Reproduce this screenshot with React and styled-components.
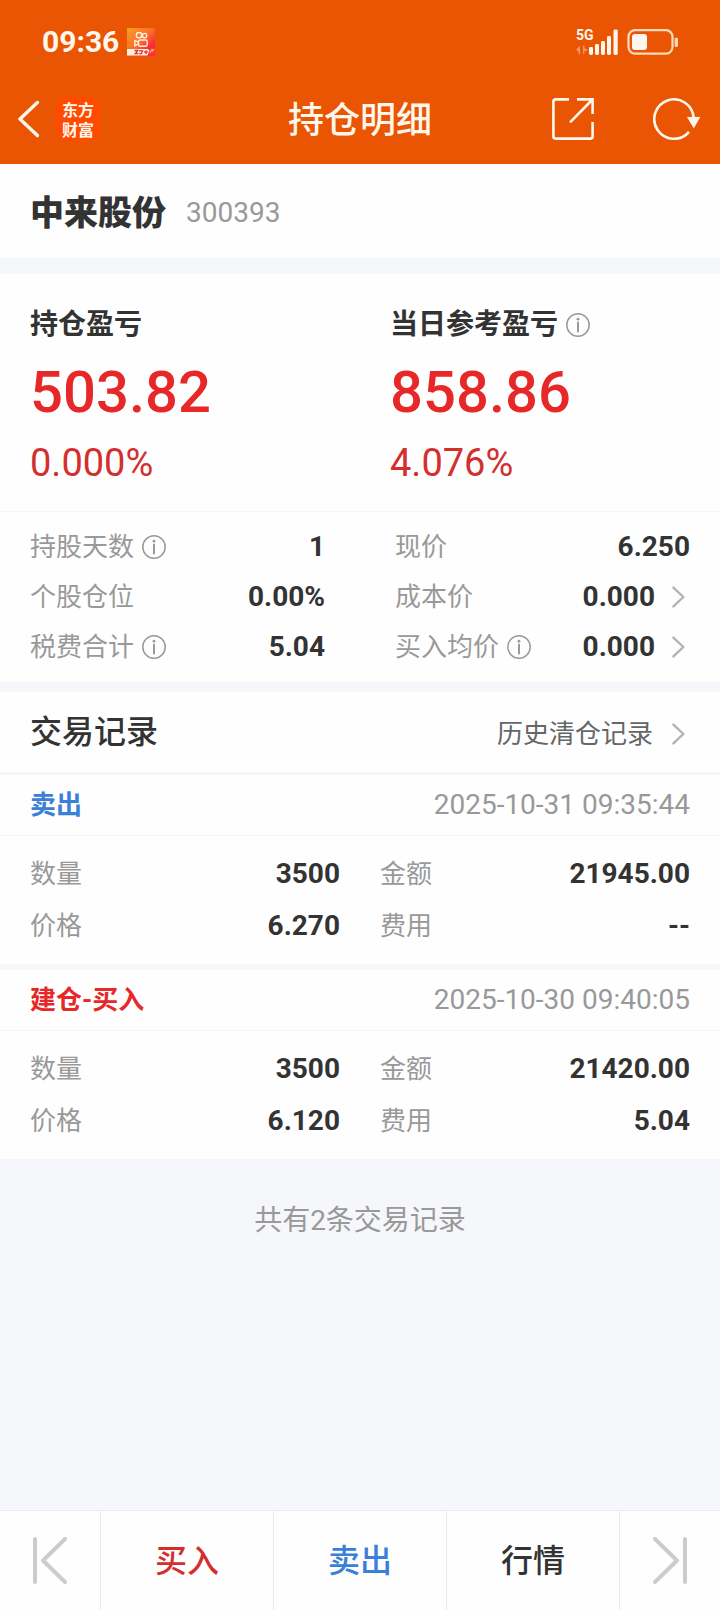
import React from "react";
import styled, { createGlobalStyle, css } from "styled-components";

const color = {
  brand: "#e95502",
  cream: "#fff6ec",
  ink: "#333333",
  soft: "#666666",
  muted: "#999999",
  faint: "#cccccc",
  chevron: "#b3b3b3",
  red: "#e62828",
  redDark: "#d42f2f",
  blue: "#3a80d9",
  band: "#f6f7fa",
  line: "#f5f6f8",
  rule: "#e9ebee",
};

const GlobalStyle = createGlobalStyle`
  *, *::before, *::after { box-sizing: border-box; }
  body {
    margin: 0;
    background: ${color.band};
    color: ${color.ink};
    font-family: Roboto, "Noto Sans CJK SC", sans-serif;
    font-size: 26px;
    line-height: 36px;
  }
  h1, h2, h3, p, dl, dd { margin: 0; font-weight: 400; }
  button {
    border: 0;
    padding: 0;
    background: none;
    color: inherit;
    font: inherit;
    cursor: pointer;
  }
  svg { display: block; flex: none; }
`;

const Page = styled.div`
  display: flex;
  flex-direction: column;
  min-height: 100vh;
`;

const Header = styled.header`
  background: ${color.brand};
  color: ${color.cream};
`;

const StatusBar = styled.div`
  display: flex;
  align-items: center;
  justify-content: space-between;
  height: 74px;
  padding: 10px 41px 0 42px;
`;

const StatusGroup = styled.div`
  display: flex;
  align-items: center;
  gap: 8px;
`;

const Clock = styled.time`
  font-size: 30px;
  font-weight: 700;
`;

const TitleBar = styled.div`
  display: grid;
  grid-template-columns: 1fr auto 1fr;
  align-items: center;
  height: 90px;
  padding: 0 18px;
`;

const TitleSide = styled.div`
  display: flex;
  align-items: center;
  justify-content: ${(p) => (p.$end ? "flex-end" : "flex-start")};
  gap: ${(p) => (p.$end ? "59px" : "16px")};
`;

const Title = styled.h1`
  padding-top: 3px;
  font-size: 36px;
  font-weight: 500;
`;

const BrandBadge = styled.span`
  display: grid;
  place-content: center;
  width: 44px;
  height: 44px;
  border-radius: 9px;
  background: #ff4a00;
  font-family: "Noto Sans CJK SC", sans-serif;
  font-size: 16px;
  font-weight: 700;
  line-height: 20px;
`;

const Main = styled.main`
  flex: 1;
`;

const Panel = styled.section`
  background: #fefefe;
  border-bottom: ${(p) => p.$band || 0}px solid ${color.band};
`;

const StockBar = styled.div`
  display: flex;
  align-items: center;
  gap: 20px;
  height: 94px;
  padding: 3px 30px 0;
`;

const StockName = styled.h2`
  font-size: 34px;
  font-weight: 900;
`;

const StockCode = styled.span`
  color: ${color.muted};
  font-size: 28px;
`;

const ProfitGrid = styled.div`
  display: grid;
  grid-template-columns: 1fr 1fr;
  padding: 32px 0 25px;
  border-bottom: 1px solid ${color.line};
`;

const Profit = styled.div`
  padding-left: 30px;
`;

const ProfitTitle = styled.h3`
  display: flex;
  align-items: center;
  gap: 8px;
  height: 38px;
  font-size: 28px;
  font-weight: 700;
`;

const ProfitAmount = styled.p`
  color: ${color.red};
  font-size: 58px;
  font-weight: 500;
  line-height: 96px;
`;

const ProfitRate = styled.p`
  color: ${color.redDark};
  font-size: 38px;
  line-height: 46px;
`;

const FactGrid = styled.dl`
  display: grid;
  grid-template-columns: 1fr 1fr;
  grid-auto-rows: ${(p) => p.$row}px;
  column-gap: ${(p) => p.$gap}px;
  padding: ${(p) => p.$pad}px 30px;
`;

const FactRow = styled.div`
  display: flex;
  align-items: center;
  justify-content: space-between;
`;

const FactLabel = styled.dt`
  display: flex;
  align-items: center;
  gap: 8px;
  color: ${color.muted};
`;

const FactValue = styled.dd`
  display: flex;
  align-items: center;
  gap: 16px;
  font-size: 28px;
  font-weight: 700;
`;

const RecordsBar = styled.div`
  display: flex;
  align-items: center;
  justify-content: space-between;
  height: 83px;
  padding: 0 30px;
  border-bottom: 3px solid ${color.line};
`;

const RecordsTitle = styled.h2`
  font-size: 32px;
  font-weight: 500;
`;

const HistoryLink = styled.a`
  display: flex;
  align-items: center;
  gap: 18px;
  padding-top: 3px;
  color: ${color.soft};
  text-decoration: none;
`;

const TradeBar = styled.div`
  display: flex;
  align-items: center;
  justify-content: space-between;
  height: 61px;
  padding: 0 30px;
  border-bottom: 1px solid ${color.line};
`;

const TradeKind = styled.h3`
  color: ${(p) => (p.$sell ? color.blue : color.red)};
  font-size: 26px;
  font-weight: 700;
`;

const TradeTime = styled.time`
  color: ${color.muted};
  font-size: 28px;
`;

const Summary = styled.p`
  padding: 44px 30px;
  color: ${color.muted};
  font-size: 28px;
  text-align: center;
`;

const BottomBar = styled.nav`
  display: flex;
  height: 100px;
  border-top: 1px solid ${color.rule};
  background: #fefefe;
`;

const tone = { red: color.redDark, blue: color.blue, ink: color.ink };

const Tab = styled.button`
  display: flex;
  flex: 1;
  align-items: center;
  justify-content: center;
  color: ${(p) => tone[p.$tone]};
  font-size: 32px;
  font-weight: 500;
  border-left: 1px solid ${color.rule};
  ${(p) =>
    p.$step &&
    css`
      flex: 0 0 101px;
      color: ${color.faint};
    `}
  &:first-child {
    flex-basis: 100px;
    border-left: 0;
  }
`;

function AppBadge() {
  return (
    <svg width="28" height="28" viewBox="0 0 28 28" fill="none" aria-hidden="true">
      <defs>
        <linearGradient id="badge" x1="0" y1="0" x2="1" y2="1">
          <stop offset="0" stopColor="#f9a023" />
          <stop offset="0.5" stopColor="#fb6a2c" />
          <stop offset="0.75" stopColor="#fb2a3c" />
          <stop offset="1" stopColor="#ff2a50" />
        </linearGradient>
      </defs>
      <rect width="28" height="28" fill="url(#badge)" />
      <g stroke="#fff0e0" strokeWidth="1.4">
        <circle cx="12" cy="7.2" r="2.7" />
        <circle cx="17.6" cy="7.6" r="2.2" />
        <rect x="11.5" y="12" width="8.7" height="6.2" rx="1.6" />
        <path d="M11.5 14.2L7.8 12.6v5l3.7-1.6" />
      </g>
      <path d="M0 21h20.5l2 1.2L20.5 27.4H0z" fill="#fff0e0" />
      <path d="M7.5 22.5h3.2l-2.4 3h3M12 22.8h3.6l-1.2 2.8h-2.2M17.2 24h3.6M19 22.3v3.6" stroke="#d8382a" strokeWidth="1.3" />
      <path d="M23 25l1.6-3.4h2L25 24" stroke="#fbb04c" strokeWidth="1.2" />
    </svg>
  );
}

function SignalIcon() {
  return (
    <svg width="43" height="36" viewBox="0 -4 43 36" fill={color.cream} role="img" aria-label="5G">
      <text x="0" y="12" fontSize="14" fontWeight="700">5G</text>
      <g opacity="0.4">
        <path d="M4 18v8.5H2.6V24L0 21.6 4 18z" />
        <path d="M7 17.5v8.5l1.4-.2v-2.2L12 22l-3.6-2v-2.5z" />
      </g>
      <rect x="13" y="19" width="4" height="8" rx="1.4" />
      <rect x="19" y="16" width="4" height="11" rx="1.4" />
      <rect x="25" y="13" width="4" height="14" rx="1.4" />
      <rect x="31" y="8" width="4" height="19" rx="1.4" />
      <rect x="37.5" y="1.5" width="4.2" height="25.5" rx="1.4" />
    </svg>
  );
}

function BatteryIcon() {
  return (
    <svg width="52" height="26" viewBox="0 0 52 26" fill="none" aria-hidden="true">
      <rect x="1.5" y="1.2" width="44" height="23.4" rx="6.5" stroke="#ffd9b8" strokeWidth="2.2" />
      <rect x="5" y="5" width="15" height="16" rx="3" fill="#fff5f0" />
      <rect x="47.6" y="8.5" width="3.4" height="9.5" rx="1.6" fill="#ffd9b8" />
    </svg>
  );
}

function BackIcon() {
  return (
    <svg width="22" height="38" viewBox="0 0 22 38" fill="none" stroke="currentColor" strokeWidth="3.4" strokeLinecap="round" strokeLinejoin="round">
      <path d="M19.4 2.5L2 19l17.4 16.6" />
    </svg>
  );
}

function ShareIcon() {
  return (
    <svg width="42" height="42" viewBox="0 0 42 42" fill="none" stroke="currentColor" strokeWidth="2.6">
      <path d="M17 1.4H3.4a2 2 0 0 0-2 2v35.2a2 2 0 0 0 2 2h35.2a2 2 0 0 0 2-2V24" />
      <path d="M25 1.4h15.6V16M40 2L18 24.4" />
    </svg>
  );
}

function RefreshIcon() {
  return (
    <svg width="49" height="42" viewBox="0 0 49 42" fill="none">
      <path d="M36 33.8A19.7 19.7 0 1 1 40.6 19.5" stroke="currentColor" strokeWidth="2.6" />
      <path d="M34.6 19.4h12L40.8 29.6z" fill="currentColor" stroke="currentColor" strokeLinejoin="round" />
    </svg>
  );
}

function InfoIcon() {
  return (
    <svg width="24" height="24" viewBox="0 0 24 24" fill="none" stroke={color.muted} aria-hidden="true">
      <circle cx="12" cy="12" r="11.2" strokeWidth="1.5" />
      <path d="M12 9.4V18.4" strokeWidth="2" strokeLinecap="round" />
      <circle cx="12" cy="6.2" r="1.4" fill={color.muted} stroke="none" />
    </svg>
  );
}

function ChevronIcon() {
  return (
    <svg width="19" height="24" viewBox="0 0 19 24" fill="none" stroke={color.chevron} strokeWidth="2.4" strokeLinecap="round" strokeLinejoin="round" aria-hidden="true">
      <path d="M2.4 2.6L12.4 12 2.4 21.4" />
    </svg>
  );
}

function StepIcon({ next }) {
  return (
    <svg width="34" height="48" viewBox="0 0 34 48" fill="none" stroke="currentColor" strokeWidth="4" strokeLinecap="round" strokeLinejoin="round">
      {next ? <path d="M32 2v43M2 2l22 21.5L2 45" /> : <path d="M2 2v43M32 2L10 23.5 32 45" />}
    </svg>
  );
}

const facts = [
  { label: "持股天数", info: true, value: "1" },
  { label: "现价", value: "6.250" },
  { label: "个股仓位", value: "0.00%" },
  { label: "成本价", value: "0.000", more: true },
  { label: "税费合计", info: true, value: "5.04" },
  { label: "买入均价", info: true, value: "0.000", more: true },
];

const trades = [
  {
    kind: "卖出",
    sell: true,
    time: "2025-10-31 09:35:44",
    band: 6,
    items: [
      { label: "数量", value: "3500" },
      { label: "金额", value: "21945.00" },
      { label: "价格", value: "6.270" },
      { label: "费用", value: "--" },
    ],
  },
  {
    kind: "建仓-买入",
    time: "2025-10-30 09:40:05",
    items: [
      { label: "数量", value: "3500" },
      { label: "金额", value: "21420.00" },
      { label: "价格", value: "6.120" },
      { label: "费用", value: "5.04" },
    ],
  },
];

function Fact({ label, value, info, more }) {
  return (
    <FactRow>
      <FactLabel>
        {label}
        {info && <InfoIcon />}
      </FactLabel>
      <FactValue>
        {value}
        {more && <ChevronIcon />}
      </FactValue>
    </FactRow>
  );
}

export default function App() {
  return (
    <Page>
      <GlobalStyle />
      <Header>
        <StatusBar>
          <StatusGroup>
            <Clock>09:36</Clock>
            <AppBadge />
          </StatusGroup>
          <StatusGroup>
            <SignalIcon />
            <BatteryIcon />
          </StatusGroup>
        </StatusBar>
        <TitleBar>
          <TitleSide>
            <button type="button" aria-label="返回">
              <BackIcon />
            </button>
            <BrandBadge>
              东方
              <br />
              财富
            </BrandBadge>
          </TitleSide>
          <Title>持仓明细</Title>
          <TitleSide $end>
            <button type="button" aria-label="分享">
              <ShareIcon />
            </button>
            <button type="button" aria-label="刷新">
              <RefreshIcon />
            </button>
          </TitleSide>
        </TitleBar>
      </Header>

      <Main>
        <Panel $band={16}>
          <StockBar>
            <StockName>中来股份</StockName>
            <StockCode>300393</StockCode>
          </StockBar>
        </Panel>

        <Panel $band={10}>
          <ProfitGrid>
            <Profit>
              <ProfitTitle>持仓盈亏</ProfitTitle>
              <ProfitAmount>503.82</ProfitAmount>
              <ProfitRate>0.000%</ProfitRate>
            </Profit>
            <Profit>
              <ProfitTitle>
                当日参考盈亏
                <InfoIcon />
              </ProfitTitle>
              <ProfitAmount>858.86</ProfitAmount>
              <ProfitRate>4.076%</ProfitRate>
            </Profit>
          </ProfitGrid>
          <FactGrid $row={50} $gap={70} $pad={10}>
            {facts.map((f) => (
              <Fact key={f.label} {...f} />
            ))}
          </FactGrid>
        </Panel>

        <Panel>
          <RecordsBar>
            <RecordsTitle>交易记录</RecordsTitle>
            <HistoryLink href="#history">
              历史清仓记录
              <ChevronIcon />
            </HistoryLink>
          </RecordsBar>
        </Panel>

        {trades.map((t) => (
          <Panel key={t.time} $band={t.band}>
            <TradeBar>
              <TradeKind $sell={t.sell}>{t.kind}</TradeKind>
              <TradeTime>{t.time}</TradeTime>
            </TradeBar>
            <FactGrid $row={52} $gap={40} $pad={12}>
              {t.items.map((i) => (
                <Fact key={i.label} {...i} />
              ))}
            </FactGrid>
          </Panel>
        ))}

        <Summary>共有2条交易记录</Summary>
      </Main>

      <BottomBar>
        <Tab type="button" $step aria-label="上一个">
          <StepIcon />
        </Tab>
        <Tab type="button" $tone="red">买入</Tab>
        <Tab type="button" $tone="blue">卖出</Tab>
        <Tab type="button" $tone="ink">行情</Tab>
        <Tab type="button" $step aria-label="下一个">
          <StepIcon next />
        </Tab>
      </BottomBar>
    </Page>
  );
}
